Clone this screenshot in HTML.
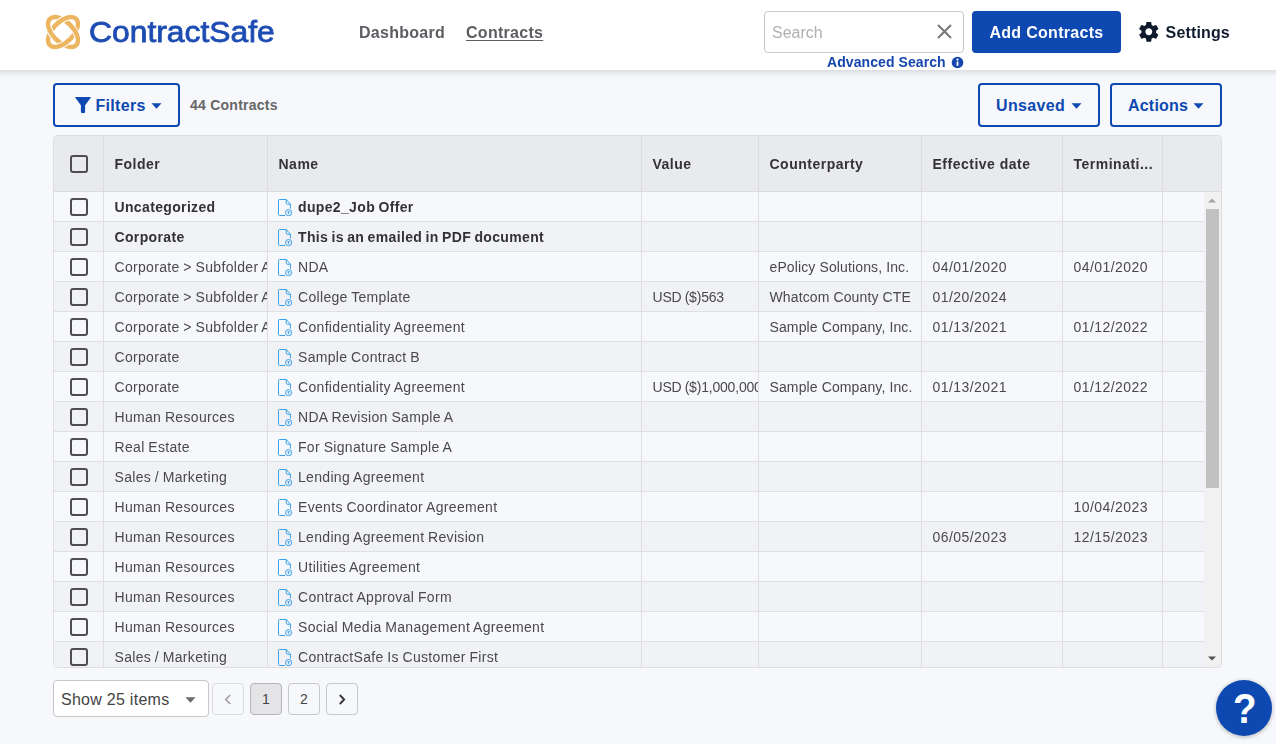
<!DOCTYPE html>
<html lang="en">
<head>
<meta charset="utf-8">
<title>ContractSafe - Contracts</title>
<style>
*{box-sizing:border-box;margin:0;padding:0}
html,body{width:1276px;height:744px;overflow:hidden}
body{background:#f7f8fc;font-family:"Liberation Sans",sans-serif;color:#444;font-size:14px;position:relative}
.abs{position:absolute}
#hdr{will-change:transform;position:absolute;left:-20px;top:0;width:1316px;height:70px;background:#fff;box-shadow:0 2px 6px rgba(0,0,0,.15)}
#logo{position:absolute;left:43px;top:11.700px}
#brand{position:absolute;left:88.600px;top:13.100px;font-size:30px;line-height:38px;color:#1d4db3;font-weight:400;letter-spacing:0;-webkit-text-stroke:0.800px #1d4db3;white-space:nowrap;transform:scaleX(1.061);transform-origin:0 0}
.nav{position:absolute;top:22.500px;font-size:16px;line-height:20px;letter-spacing:.28px;font-weight:700;color:#5b5d63;white-space:nowrap}
.nav.act{text-decoration:underline;text-underline-offset:1.500px;text-decoration-thickness:1px}
#search{position:absolute;left:764px;top:11px;width:200px;height:42px;border:1px solid #c9c9c9;border-radius:4px;background:#fff}
#search span{position:absolute;left:7px;top:10.500px;font-size:16px;line-height:20px;color:#b0b0b0}
#adv{position:absolute;left:827px;top:53px;letter-spacing:.08px;font-size:14px;line-height:18px;font-weight:700;color:#1546ad;white-space:nowrap}
#addc{position:absolute;left:972px;top:11px;letter-spacing:.3px;width:149px;height:42px;border-radius:4px;background:#0d49b1;color:#fff;font-weight:700;font-size:16px;line-height:44.600px;text-align:center;white-space:nowrap}
#sett{position:absolute;left:1165.600px;top:22.500px;letter-spacing:.15px;font-size:16px;line-height:20px;font-weight:700;color:#0f1b2d;white-space:nowrap}
.obtn{position:absolute;top:83px;height:44px;border:2px solid #0d49b1;border-radius:4px;color:#0d49b1;font-weight:700;font-size:16px;line-height:41px;letter-spacing:.35px;white-space:nowrap;background:transparent}
#cnt{position:absolute;left:190px;top:95px;letter-spacing:.25px;font-size:14px;line-height:20px;font-weight:700;color:#666;white-space:nowrap}
#tbl{will-change:transform;position:absolute;left:53px;top:135px;width:1169px;height:533px;border:1px solid #dedede;border-radius:4px;overflow:hidden;background:#f7f8fc}
#th{position:absolute;left:0;top:0;width:1167px;height:56px;background:#e9eaee;border-bottom:1px solid #dcdcdc}
#th .c{position:absolute;top:0;height:56px;line-height:56px;font-weight:700;color:#333;font-size:14px;padding-left:10.500px;letter-spacing:.5px;border-left:1px solid #dcdcdc;white-space:nowrap;overflow:hidden}
#tb{position:absolute;left:0;top:56px;width:1150px;height:476px;overflow:hidden}
.row{position:relative;height:30px;width:1150px;border-bottom:1px solid #e0e0e3;background:#f7f8fc}
.row.alt{background:#f1f2f6}
.row .c{position:absolute;top:0;height:29px;line-height:31px;padding-left:10.500px;letter-spacing:.32px;word-spacing:-.5px;border-left:1px solid #dedee0;white-space:nowrap;overflow:hidden;color:#4a4a4a;font-size:14px}
.row.b .c{font-weight:700;color:#333;letter-spacing:.35px;word-spacing:-.9px}
.row .c3{letter-spacing:-.2px}
.row .c4{letter-spacing:.12px;word-spacing:0}
.row .c5,.row .c6{letter-spacing:.45px}
.c0{left:0;width:50px;border-left:none!important}
.c1{left:49px;width:164px}
.c2{left:213px;width:374px}
.c3{left:587px;width:117px}
.c4{left:704px;width:163px}
.c5{left:867px;width:141px}
.c6{left:1008px;width:100px}
.c7{left:1108px;width:60px}
.cb{position:absolute;left:16px;top:6px;width:18px;height:18px;border:2px solid #4e4e52;border-radius:3px;background:transparent}
#th .cb{top:19px}
.fi{position:absolute;left:10px;top:7px}
.c2 span{position:absolute;left:30px;top:0}
#sb{position:absolute;left:1150px;top:56px;width:17px;height:476px;background:#f1f1f1}
#sb .thumb{position:absolute;left:2px;top:17px;width:13px;height:279px;background:#c1c1c1}
.pg{position:absolute;top:683px;height:32px;width:32px;border:1px solid #c8c8c8;border-radius:4px;text-align:center;line-height:30px;font-size:14px;color:#444;background:#f7f8fc}
#sel{position:absolute;left:53px;top:680px;width:156px;height:37px;border:1px solid #c8c8c8;border-radius:4px;background:#fff;font-size:16px;line-height:37px;letter-spacing:.27px;padding-left:7px;color:#444;white-space:nowrap}
#help{position:absolute;left:1216px;top:680px;width:56px;height:56px;border-radius:50%;background:#0d49b1;box-shadow:0 1px 4px rgba(0,0,0,.3);color:#fff;font-weight:700;font-size:42px;line-height:57.500px;text-align:center}
#help span{display:inline-block;transform:scaleX(.92);position:relative;left:.5px}
</style>
</head>
<body>
<div id="hdr"><div style="position:absolute;left:20px;top:0;width:1276px;height:70px">
  <svg id="logo" width="40" height="40" viewBox="0 0 40 40">
    <defs>
      <clipPath id="lr"><rect x="0" y="12" width="13" height="16"/><rect x="27" y="12" width="13" height="16"/></clipPath>
    </defs>
    <g fill="none" stroke-linecap="butt">
      <ellipse cx="20" cy="20" rx="18.600" ry="10.100" transform="rotate(45 20 20)" stroke="#edb55f" stroke-width="4.400"/>
      <ellipse cx="20" cy="20" rx="18.600" ry="10.100" transform="rotate(-45 20 20)" stroke="#fff" stroke-width="6.400"/>
      <ellipse cx="20" cy="20" rx="18.600" ry="10.100" transform="rotate(-45 20 20)" stroke="#edb55f" stroke-width="4.400"/>
      <g clip-path="url(#lr)">
        <ellipse cx="20" cy="20" rx="18.600" ry="10.100" transform="rotate(45 20 20)" stroke="#fff" stroke-width="6.400"/>
        <ellipse cx="20" cy="20" rx="18.600" ry="10.100" transform="rotate(45 20 20)" stroke="#edb55f" stroke-width="4.400"/>
      </g>
    </g>
  </svg>
  <div id="brand">ContractSafe</div>
  <div class="nav" style="left:359px">Dashboard</div>
  <div class="nav act" style="left:466px">Contracts</div>
  <div id="search"><span>Search</span>
    <svg class="abs" style="left:171.600px;top:12.300px" width="15" height="15" viewBox="0 0 15 15"><path d="M1 1l13 13M14 1L1 14" stroke="#767676" stroke-width="2" fill="none"/></svg>
  </div>
  <div id="adv">Advanced Search</div>
  <svg class="abs" style="left:950.700px;top:55.600px" width="13" height="13" viewBox="0 0 13 13"><circle cx="6.500" cy="6.500" r="5.800" fill="#1546ad"/><rect x="5.600" y="5.500" width="1.800" height="4.300" fill="#fff"/><circle cx="6.500" cy="3.600" r="1.100" fill="#fff"/></svg>
  <div id="addc">Add Contracts</div>
  <svg class="abs" style="left:1137.100px;top:20.100px" width="23.600" height="23.600" viewBox="0 0 24 24"><path fill="#0f1b2d" d="M19.43 12.98c.04-.32.07-.64.07-.98s-.03-.66-.07-.98l2.11-1.65c.19-.15.24-.42.12-.64l-2-3.46c-.12-.22-.39-.3-.61-.22l-2.49 1c-.52-.4-1.08-.73-1.69-.98l-.38-2.65C14.46 2.18 14.25 2 14 2h-4c-.25 0-.46.18-.49.42l-.38 2.65c-.61.25-1.17.59-1.69.98l-2.49-1c-.23-.09-.49 0-.61.22l-2 3.46c-.13.22-.07.49.12.64l2.11 1.65c-.04.32-.07.65-.07.98s.03.66.07.98l-2.11 1.65c-.19.15-.24.42-.12.64l2 3.46c.12.22.39.3.61.22l2.49-1c.52.4 1.08.73 1.69.98l.38 2.65c.03.24.24.42.49.42h4c.25 0 .46-.18.49-.42l.38-2.65c.61-.25 1.17-.59 1.69-.98l2.49 1c.23.09.49 0 .61-.22l2-3.46c.12-.22.07-.49-.12-.64l-2.11-1.65zM12 15.5c-1.93 0-3.5-1.57-3.5-3.5s1.570-3.5 3.5-3.500 3.500 1.570 3.500 3.500-1.570 3.500-3.500 3.500z"/></svg>
  <div id="sett">Settings</div>
</div></div>

<div class="obtn" style="left:53px;width:127px">
  <svg class="abs" style="left:20px;top:12px" width="16" height="16" viewBox="0 0 16 16"><path d="M0.700 0h14.600a.5.500 0 0 1 .4.800L10.100 8.300V15a1 1 0 0 1-1 1H6.900a1 1 0 0 1-1-1V8.300L.3.800A.5.500 0 0 1 .7 0z" fill="#0d49b1"/></svg>
  <span class="abs" style="left:40.400px;top:0">Filters</span>
  <svg class="abs" style="left:96px;top:18px" width="11" height="6" viewBox="0 0 11 6"><path d="M0.500 0.300h10l-5 5.400z" fill="#0d49b1"/></svg>
</div>
<div id="cnt">44 Contracts</div>
<div class="obtn" style="left:978px;width:122px">
  <span class="abs" style="left:16px;top:0">Unsaved</span>
  <svg class="abs" style="left:91px;top:18px" width="11" height="6" viewBox="0 0 11 6"><path d="M0.500 0.300h10l-5 5.400z" fill="#0d49b1"/></svg>
</div>
<div class="obtn" style="left:1110px;width:112px;letter-spacing:.2px">
  <span class="abs" style="left:16px;top:0">Actions</span>
  <svg class="abs" style="left:81px;top:18px" width="11" height="6" viewBox="0 0 11 6"><path d="M0.500 0.300h10l-5 5.400z" fill="#0d49b1"/></svg>
</div>

<div id="tbl">
  <div id="th">
    <div class="c c0"><span class="cb"></span></div>
    <div class="c c1">Folder</div>
    <div class="c c2">Name</div>
    <div class="c c3">Value</div>
    <div class="c c4">Counterparty</div>
    <div class="c c5">Effective date</div>
    <div class="c c6">Terminati...</div>
    <div class="c c7"></div>
  </div>
  <div id="tb">
<div class="row b"><div class="c c0"><span class="cb"></span></div><div class="c c1">Uncategorized</div><div class="c c2"><svg class="fi" viewBox="0 0 15 18" width="15" height="18"><g fill="none" stroke="#3ba1ea" stroke-width="1"><path d="M7 16.500H1.500a1 1 0 0 1-1-1V1.500a1 1 0 0 1 1-1H8.200L12.500 5.300V9.600"/><path d="M8.200 0.500V3.800a1.500 1.500 0 0 0 1.500 1.500H12.500"/><circle cx="10.600" cy="13.600" r="3.100"/><path d="M10.600 12v3.300M9.100 13.500l1.500-1.500 1.500 1.500" stroke-width=".9"/></g></svg><span>dupe2_Job Offer</span></div><div class="c c3"></div><div class="c c4"></div><div class="c c5"></div><div class="c c6"></div><div class="c c7"></div></div>
<div class="row alt b"><div class="c c0"><span class="cb"></span></div><div class="c c1">Corporate</div><div class="c c2"><svg class="fi" viewBox="0 0 15 18" width="15" height="18"><g fill="none" stroke="#3ba1ea" stroke-width="1"><path d="M7 16.500H1.500a1 1 0 0 1-1-1V1.500a1 1 0 0 1 1-1H8.200L12.500 5.300V9.600"/><path d="M8.200 0.500V3.800a1.500 1.500 0 0 0 1.500 1.500H12.500"/><circle cx="10.600" cy="13.600" r="3.100"/><path d="M10.600 12v3.300M9.100 13.500l1.500-1.500 1.500 1.500" stroke-width=".9"/></g></svg><span>This is an emailed in PDF document</span></div><div class="c c3"></div><div class="c c4"></div><div class="c c5"></div><div class="c c6"></div><div class="c c7"></div></div>
<div class="row"><div class="c c0"><span class="cb"></span></div><div class="c c1">Corporate > Subfolder A</div><div class="c c2"><svg class="fi" viewBox="0 0 15 18" width="15" height="18"><g fill="none" stroke="#3ba1ea" stroke-width="1"><path d="M7 16.500H1.500a1 1 0 0 1-1-1V1.500a1 1 0 0 1 1-1H8.200L12.500 5.300V9.600"/><path d="M8.200 0.500V3.800a1.500 1.500 0 0 0 1.500 1.500H12.500"/><circle cx="10.600" cy="13.600" r="3.100"/><path d="M10.600 12v3.300M9.100 13.500l1.500-1.500 1.500 1.500" stroke-width=".9"/></g></svg><span>NDA</span></div><div class="c c3"></div><div class="c c4">ePolicy Solutions, Inc.</div><div class="c c5">04/01/2020</div><div class="c c6">04/01/2020</div><div class="c c7"></div></div>
<div class="row alt"><div class="c c0"><span class="cb"></span></div><div class="c c1">Corporate > Subfolder A</div><div class="c c2"><svg class="fi" viewBox="0 0 15 18" width="15" height="18"><g fill="none" stroke="#3ba1ea" stroke-width="1"><path d="M7 16.500H1.500a1 1 0 0 1-1-1V1.500a1 1 0 0 1 1-1H8.200L12.500 5.300V9.600"/><path d="M8.200 0.500V3.800a1.500 1.500 0 0 0 1.500 1.500H12.500"/><circle cx="10.600" cy="13.600" r="3.100"/><path d="M10.600 12v3.300M9.100 13.500l1.500-1.500 1.500 1.500" stroke-width=".9"/></g></svg><span>College Template</span></div><div class="c c3">USD ($)563</div><div class="c c4">Whatcom County CTE</div><div class="c c5">01/20/2024</div><div class="c c6"></div><div class="c c7"></div></div>
<div class="row"><div class="c c0"><span class="cb"></span></div><div class="c c1">Corporate > Subfolder A</div><div class="c c2"><svg class="fi" viewBox="0 0 15 18" width="15" height="18"><g fill="none" stroke="#3ba1ea" stroke-width="1"><path d="M7 16.500H1.500a1 1 0 0 1-1-1V1.500a1 1 0 0 1 1-1H8.200L12.500 5.300V9.600"/><path d="M8.200 0.500V3.800a1.500 1.500 0 0 0 1.500 1.500H12.500"/><circle cx="10.600" cy="13.600" r="3.100"/><path d="M10.600 12v3.300M9.100 13.500l1.500-1.500 1.500 1.500" stroke-width=".9"/></g></svg><span>Confidentiality Agreement</span></div><div class="c c3"></div><div class="c c4">Sample Company, Inc.</div><div class="c c5">01/13/2021</div><div class="c c6">01/12/2022</div><div class="c c7"></div></div>
<div class="row alt"><div class="c c0"><span class="cb"></span></div><div class="c c1">Corporate</div><div class="c c2"><svg class="fi" viewBox="0 0 15 18" width="15" height="18"><g fill="none" stroke="#3ba1ea" stroke-width="1"><path d="M7 16.500H1.500a1 1 0 0 1-1-1V1.500a1 1 0 0 1 1-1H8.200L12.500 5.300V9.600"/><path d="M8.200 0.500V3.800a1.500 1.500 0 0 0 1.500 1.500H12.500"/><circle cx="10.600" cy="13.600" r="3.100"/><path d="M10.600 12v3.300M9.100 13.500l1.500-1.500 1.500 1.500" stroke-width=".9"/></g></svg><span>Sample Contract B</span></div><div class="c c3"></div><div class="c c4"></div><div class="c c5"></div><div class="c c6"></div><div class="c c7"></div></div>
<div class="row"><div class="c c0"><span class="cb"></span></div><div class="c c1">Corporate</div><div class="c c2"><svg class="fi" viewBox="0 0 15 18" width="15" height="18"><g fill="none" stroke="#3ba1ea" stroke-width="1"><path d="M7 16.500H1.500a1 1 0 0 1-1-1V1.500a1 1 0 0 1 1-1H8.200L12.500 5.300V9.600"/><path d="M8.200 0.500V3.800a1.500 1.500 0 0 0 1.500 1.500H12.500"/><circle cx="10.600" cy="13.600" r="3.100"/><path d="M10.600 12v3.300M9.100 13.500l1.500-1.500 1.500 1.500" stroke-width=".9"/></g></svg><span>Confidentiality Agreement</span></div><div class="c c3">USD ($)1,000,000</div><div class="c c4">Sample Company, Inc.</div><div class="c c5">01/13/2021</div><div class="c c6">01/12/2022</div><div class="c c7"></div></div>
<div class="row alt"><div class="c c0"><span class="cb"></span></div><div class="c c1">Human Resources</div><div class="c c2"><svg class="fi" viewBox="0 0 15 18" width="15" height="18"><g fill="none" stroke="#3ba1ea" stroke-width="1"><path d="M7 16.500H1.500a1 1 0 0 1-1-1V1.500a1 1 0 0 1 1-1H8.200L12.500 5.300V9.600"/><path d="M8.200 0.500V3.800a1.500 1.500 0 0 0 1.500 1.500H12.500"/><circle cx="10.600" cy="13.600" r="3.100"/><path d="M10.600 12v3.300M9.100 13.500l1.500-1.500 1.500 1.500" stroke-width=".9"/></g></svg><span>NDA Revision Sample A</span></div><div class="c c3"></div><div class="c c4"></div><div class="c c5"></div><div class="c c6"></div><div class="c c7"></div></div>
<div class="row"><div class="c c0"><span class="cb"></span></div><div class="c c1">Real Estate</div><div class="c c2"><svg class="fi" viewBox="0 0 15 18" width="15" height="18"><g fill="none" stroke="#3ba1ea" stroke-width="1"><path d="M7 16.500H1.500a1 1 0 0 1-1-1V1.500a1 1 0 0 1 1-1H8.200L12.500 5.300V9.600"/><path d="M8.200 0.500V3.800a1.500 1.500 0 0 0 1.500 1.500H12.500"/><circle cx="10.600" cy="13.600" r="3.100"/><path d="M10.600 12v3.300M9.100 13.500l1.500-1.500 1.500 1.500" stroke-width=".9"/></g></svg><span>For Signature Sample A</span></div><div class="c c3"></div><div class="c c4"></div><div class="c c5"></div><div class="c c6"></div><div class="c c7"></div></div>
<div class="row alt"><div class="c c0"><span class="cb"></span></div><div class="c c1">Sales / Marketing</div><div class="c c2"><svg class="fi" viewBox="0 0 15 18" width="15" height="18"><g fill="none" stroke="#3ba1ea" stroke-width="1"><path d="M7 16.500H1.500a1 1 0 0 1-1-1V1.500a1 1 0 0 1 1-1H8.200L12.500 5.300V9.600"/><path d="M8.200 0.500V3.800a1.500 1.500 0 0 0 1.500 1.500H12.500"/><circle cx="10.600" cy="13.600" r="3.100"/><path d="M10.600 12v3.300M9.100 13.500l1.500-1.500 1.500 1.500" stroke-width=".9"/></g></svg><span>Lending Agreement</span></div><div class="c c3"></div><div class="c c4"></div><div class="c c5"></div><div class="c c6"></div><div class="c c7"></div></div>
<div class="row"><div class="c c0"><span class="cb"></span></div><div class="c c1">Human Resources</div><div class="c c2"><svg class="fi" viewBox="0 0 15 18" width="15" height="18"><g fill="none" stroke="#3ba1ea" stroke-width="1"><path d="M7 16.500H1.500a1 1 0 0 1-1-1V1.500a1 1 0 0 1 1-1H8.200L12.500 5.300V9.600"/><path d="M8.200 0.500V3.800a1.500 1.500 0 0 0 1.500 1.500H12.500"/><circle cx="10.600" cy="13.600" r="3.100"/><path d="M10.600 12v3.300M9.100 13.500l1.500-1.500 1.500 1.500" stroke-width=".9"/></g></svg><span>Events Coordinator Agreement</span></div><div class="c c3"></div><div class="c c4"></div><div class="c c5"></div><div class="c c6">10/04/2023</div><div class="c c7"></div></div>
<div class="row alt"><div class="c c0"><span class="cb"></span></div><div class="c c1">Human Resources</div><div class="c c2"><svg class="fi" viewBox="0 0 15 18" width="15" height="18"><g fill="none" stroke="#3ba1ea" stroke-width="1"><path d="M7 16.500H1.500a1 1 0 0 1-1-1V1.500a1 1 0 0 1 1-1H8.200L12.500 5.300V9.600"/><path d="M8.200 0.500V3.800a1.500 1.500 0 0 0 1.500 1.500H12.500"/><circle cx="10.600" cy="13.600" r="3.100"/><path d="M10.600 12v3.300M9.100 13.500l1.500-1.500 1.500 1.500" stroke-width=".9"/></g></svg><span>Lending Agreement Revision</span></div><div class="c c3"></div><div class="c c4"></div><div class="c c5">06/05/2023</div><div class="c c6">12/15/2023</div><div class="c c7"></div></div>
<div class="row"><div class="c c0"><span class="cb"></span></div><div class="c c1">Human Resources</div><div class="c c2"><svg class="fi" viewBox="0 0 15 18" width="15" height="18"><g fill="none" stroke="#3ba1ea" stroke-width="1"><path d="M7 16.500H1.500a1 1 0 0 1-1-1V1.500a1 1 0 0 1 1-1H8.200L12.500 5.300V9.600"/><path d="M8.200 0.500V3.800a1.500 1.500 0 0 0 1.500 1.500H12.500"/><circle cx="10.600" cy="13.600" r="3.100"/><path d="M10.600 12v3.300M9.100 13.500l1.500-1.500 1.500 1.500" stroke-width=".9"/></g></svg><span>Utilities Agreement</span></div><div class="c c3"></div><div class="c c4"></div><div class="c c5"></div><div class="c c6"></div><div class="c c7"></div></div>
<div class="row alt"><div class="c c0"><span class="cb"></span></div><div class="c c1">Human Resources</div><div class="c c2"><svg class="fi" viewBox="0 0 15 18" width="15" height="18"><g fill="none" stroke="#3ba1ea" stroke-width="1"><path d="M7 16.500H1.500a1 1 0 0 1-1-1V1.500a1 1 0 0 1 1-1H8.200L12.500 5.300V9.600"/><path d="M8.200 0.500V3.800a1.500 1.500 0 0 0 1.500 1.500H12.500"/><circle cx="10.600" cy="13.600" r="3.100"/><path d="M10.600 12v3.300M9.100 13.500l1.500-1.500 1.500 1.500" stroke-width=".9"/></g></svg><span>Contract Approval Form</span></div><div class="c c3"></div><div class="c c4"></div><div class="c c5"></div><div class="c c6"></div><div class="c c7"></div></div>
<div class="row"><div class="c c0"><span class="cb"></span></div><div class="c c1">Human Resources</div><div class="c c2"><svg class="fi" viewBox="0 0 15 18" width="15" height="18"><g fill="none" stroke="#3ba1ea" stroke-width="1"><path d="M7 16.500H1.500a1 1 0 0 1-1-1V1.500a1 1 0 0 1 1-1H8.200L12.500 5.300V9.600"/><path d="M8.200 0.500V3.800a1.500 1.500 0 0 0 1.500 1.500H12.500"/><circle cx="10.600" cy="13.600" r="3.100"/><path d="M10.600 12v3.300M9.100 13.500l1.500-1.500 1.500 1.500" stroke-width=".9"/></g></svg><span>Social Media Management Agreement</span></div><div class="c c3"></div><div class="c c4"></div><div class="c c5"></div><div class="c c6"></div><div class="c c7"></div></div>
<div class="row alt"><div class="c c0"><span class="cb"></span></div><div class="c c1">Sales / Marketing</div><div class="c c2"><svg class="fi" viewBox="0 0 15 18" width="15" height="18"><g fill="none" stroke="#3ba1ea" stroke-width="1"><path d="M7 16.500H1.500a1 1 0 0 1-1-1V1.500a1 1 0 0 1 1-1H8.200L12.500 5.300V9.600"/><path d="M8.200 0.500V3.800a1.500 1.500 0 0 0 1.500 1.500H12.500"/><circle cx="10.600" cy="13.600" r="3.100"/><path d="M10.600 12v3.300M9.100 13.500l1.500-1.500 1.500 1.500" stroke-width=".9"/></g></svg><span>ContractSafe Is Customer First</span></div><div class="c c3"></div><div class="c c4"></div><div class="c c5"></div><div class="c c6"></div><div class="c c7"></div></div>
  </div>
  <div id="sb">
    <svg class="abs" style="left:4px;top:6px" width="8" height="5" viewBox="0 0 8 5"><path d="M0 4.500L4 0.500l4 4z" fill="#a3a3a3"/></svg>
    <div class="thumb"></div>
    <svg class="abs" style="left:4.200px;top:463.800px" width="8" height="5" viewBox="0 0 8 5"><path d="M0 0.500h8l-4 4z" fill="#505050"/></svg>
  </div>
</div>

<div id="sel">Show 25 items
  <svg class="abs" style="left:130.500px;top:16px" width="11" height="6" viewBox="0 0 11 6"><path d="M0.500 0.300h10l-5 5.400z" fill="#6a6a6a"/></svg>
</div>
<div class="pg" style="left:212px;border-color:#dcdcdc"><svg class="abs" style="left:11px;top:9.500px" width="8" height="11" viewBox="0 0 8 11"><path d="M6.200 1L1.800 5.500l4.400 4.500" fill="none" stroke="#a0a0a0" stroke-width="1.600"/></svg></div>
<div class="pg" style="left:250px;background:#e4e4e6;border-color:#b5b5b5">1</div>
<div class="pg" style="left:288px">2</div>
<div class="pg" style="left:326px"><svg class="abs" style="left:11px;top:9.500px" width="8" height="11" viewBox="0 0 8 11"><path d="M1.800 1l4.400 4.500L1.800 10" fill="none" stroke="#333" stroke-width="1.800"/></svg></div>

<div id="help"><span>?</span></div>
</body>
</html>
